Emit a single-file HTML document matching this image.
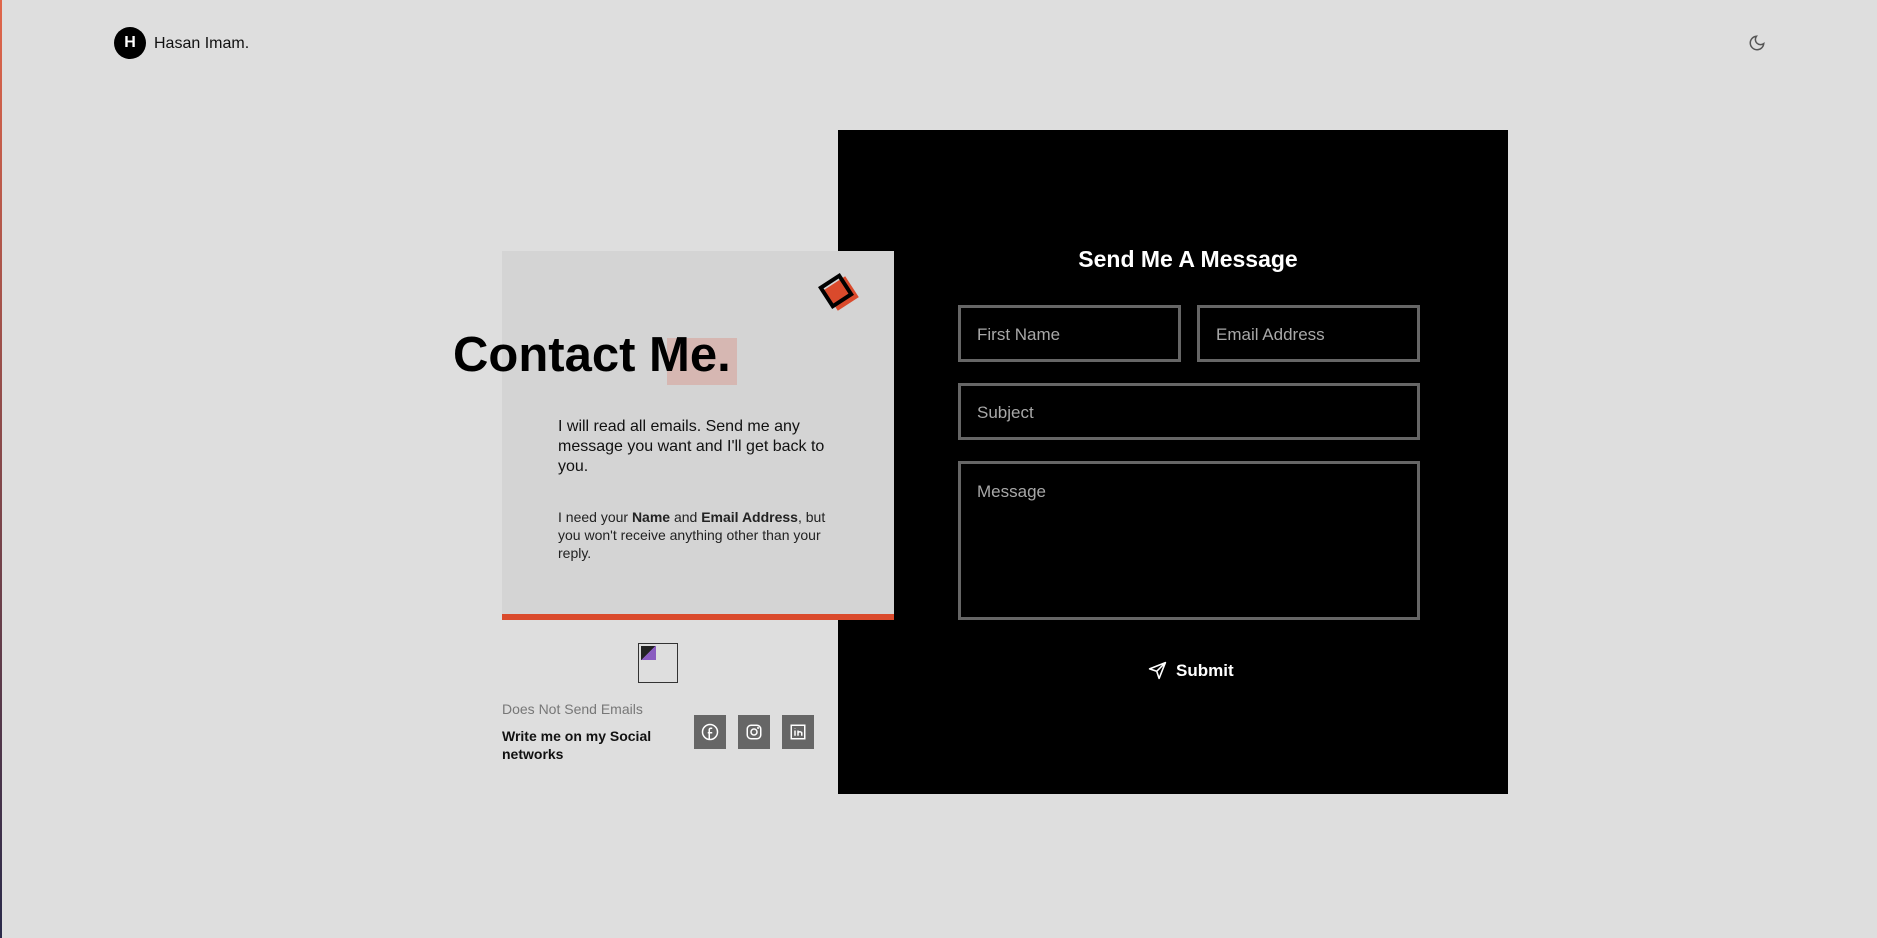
<!DOCTYPE html>
<html><head><meta charset="utf-8"><style>
*{margin:0;padding:0;box-sizing:border-box}
body{width:1877px;height:938px;background:#dedede;font-family:"Liberation Sans",sans-serif;position:relative;overflow:hidden}
.a{position:absolute}
.edge{left:0;top:0;width:2px;height:938px;background:linear-gradient(#e0664a,#2a2a4a)}
.inp{position:absolute;border:3px solid #666;color:#a8a8a8;font-size:17px;padding-left:16px;padding-top:17px}
.soc{position:absolute;top:715px;width:32px;height:34px;background:#666;display:flex;align-items:center;justify-content:center}
</style></head><body>
<div class="a edge"></div>
<div class="a" style="left:114px;top:27px;width:32px;height:32px;border-radius:50%;background:#000;color:#fff;font-weight:bold;font-size:16px;display:flex;align-items:center;justify-content:center">H</div>
<div class="a" style="left:154px;top:35px;font-size:16px;color:#111">Hasan Imam.</div>
<svg class="a" style="left:1748px;top:34px" width="18" height="18" viewBox="0 0 24 24" fill="none" stroke="#555" stroke-width="2"><path d="M21 12.8A9 9 0 1 1 11.2 3a7 7 0 0 0 9.8 9.8z"/></svg>

<div class="a" style="left:838px;top:130px;width:670px;height:664px;background:#000"></div>
<div class="a" style="left:1038px;top:246px;width:300px;text-align:center;color:#fff;font-weight:bold;font-size:23px">Send Me A Message</div>
<div class="inp" style="left:958px;top:305px;width:223px;height:57px">First Name</div>
<div class="inp" style="left:1197px;top:305px;width:223px;height:57px">Email Address</div>
<div class="inp" style="left:958px;top:383px;width:462px;height:57px">Subject</div>
<div class="inp" style="left:958px;top:461px;width:462px;height:159px;padding-top:18px">Message</div>
<svg class="a" style="left:1148px;top:661px" width="19" height="19" viewBox="0 0 24 24" fill="none" stroke="#fff" stroke-width="2" stroke-linejoin="round"><path d="M22 2L2 10l9 3 3 9z M22 2L11 13"/></svg>
<div class="a" style="left:1176px;top:661px;color:#fff;font-size:17px;font-weight:bold">Submit</div>

<div class="a" style="left:502px;top:251px;width:392px;height:369px;background:#d4d4d4;border-bottom:6px solid #da4a2c"></div>
<div class="a" style="left:829px;top:281px;width:25px;height:25px;background:#da4a2c;transform:rotate(-33deg)"></div>
<div class="a" style="left:823px;top:278px;width:26px;height:26px;border:4px solid #000;transform:rotate(-33deg)"></div>
<div class="a" style="left:667px;top:338px;width:70px;height:47px;background:#d6b7b2"></div>
<div class="a" style="left:453px;top:327px;font-size:49px;font-weight:bold;color:#000">Contact Me.</div>
<div class="a" style="left:558px;top:417px;width:290px;font-size:16px;line-height:20px;color:#111">I will read all emails. Send me any message you want and I'll get back to you.</div>
<div class="a" style="left:558px;top:508px;width:282px;font-size:14px;line-height:18px;color:#222">I need your <b>Name</b> and <b>Email Address</b>, but you won't receive anything other than your reply.</div>
<div class="a" style="left:638px;top:643px;width:40px;height:40px;border:1px solid #333"></div>
<div class="a" style="left:641px;top:646px;width:15px;height:14px;background:linear-gradient(135deg,#222 50%,#8a5cc0 50%)"></div>
<div class="a" style="left:502px;top:701px;font-size:14px;color:#777">Does Not Send Emails</div>
<div class="a" style="left:502px;top:727px;width:170px;font-size:14px;line-height:18px;color:#111;font-weight:bold">Write me on my Social networks</div>
<div class="soc" style="left:694px"><svg width="18" height="18" viewBox="0 0 24 24" fill="none" stroke="#fff" stroke-width="2"><circle cx="12" cy="12" r="10"/><path d="M15 7h-2a2 2 0 0 0-2 2v13M9 13h6"/></svg></div>
<div class="soc" style="left:738px"><svg width="18" height="18" viewBox="0 0 24 24" fill="none" stroke="#fff" stroke-width="2"><rect x="3" y="3" width="18" height="18" rx="5"/><circle cx="12" cy="12" r="4"/><circle cx="17.5" cy="6.5" r=".5"/></svg></div>
<div class="soc" style="left:782px"><svg width="18" height="18" viewBox="0 0 24 24" fill="none" stroke="#fff" stroke-width="2"><rect x="3" y="3" width="18" height="18"/><path d="M8 10v7M8 7v.5M12 17v-7M12 13a3 3 0 0 1 5 0v4"/></svg></div>
</body></html>
